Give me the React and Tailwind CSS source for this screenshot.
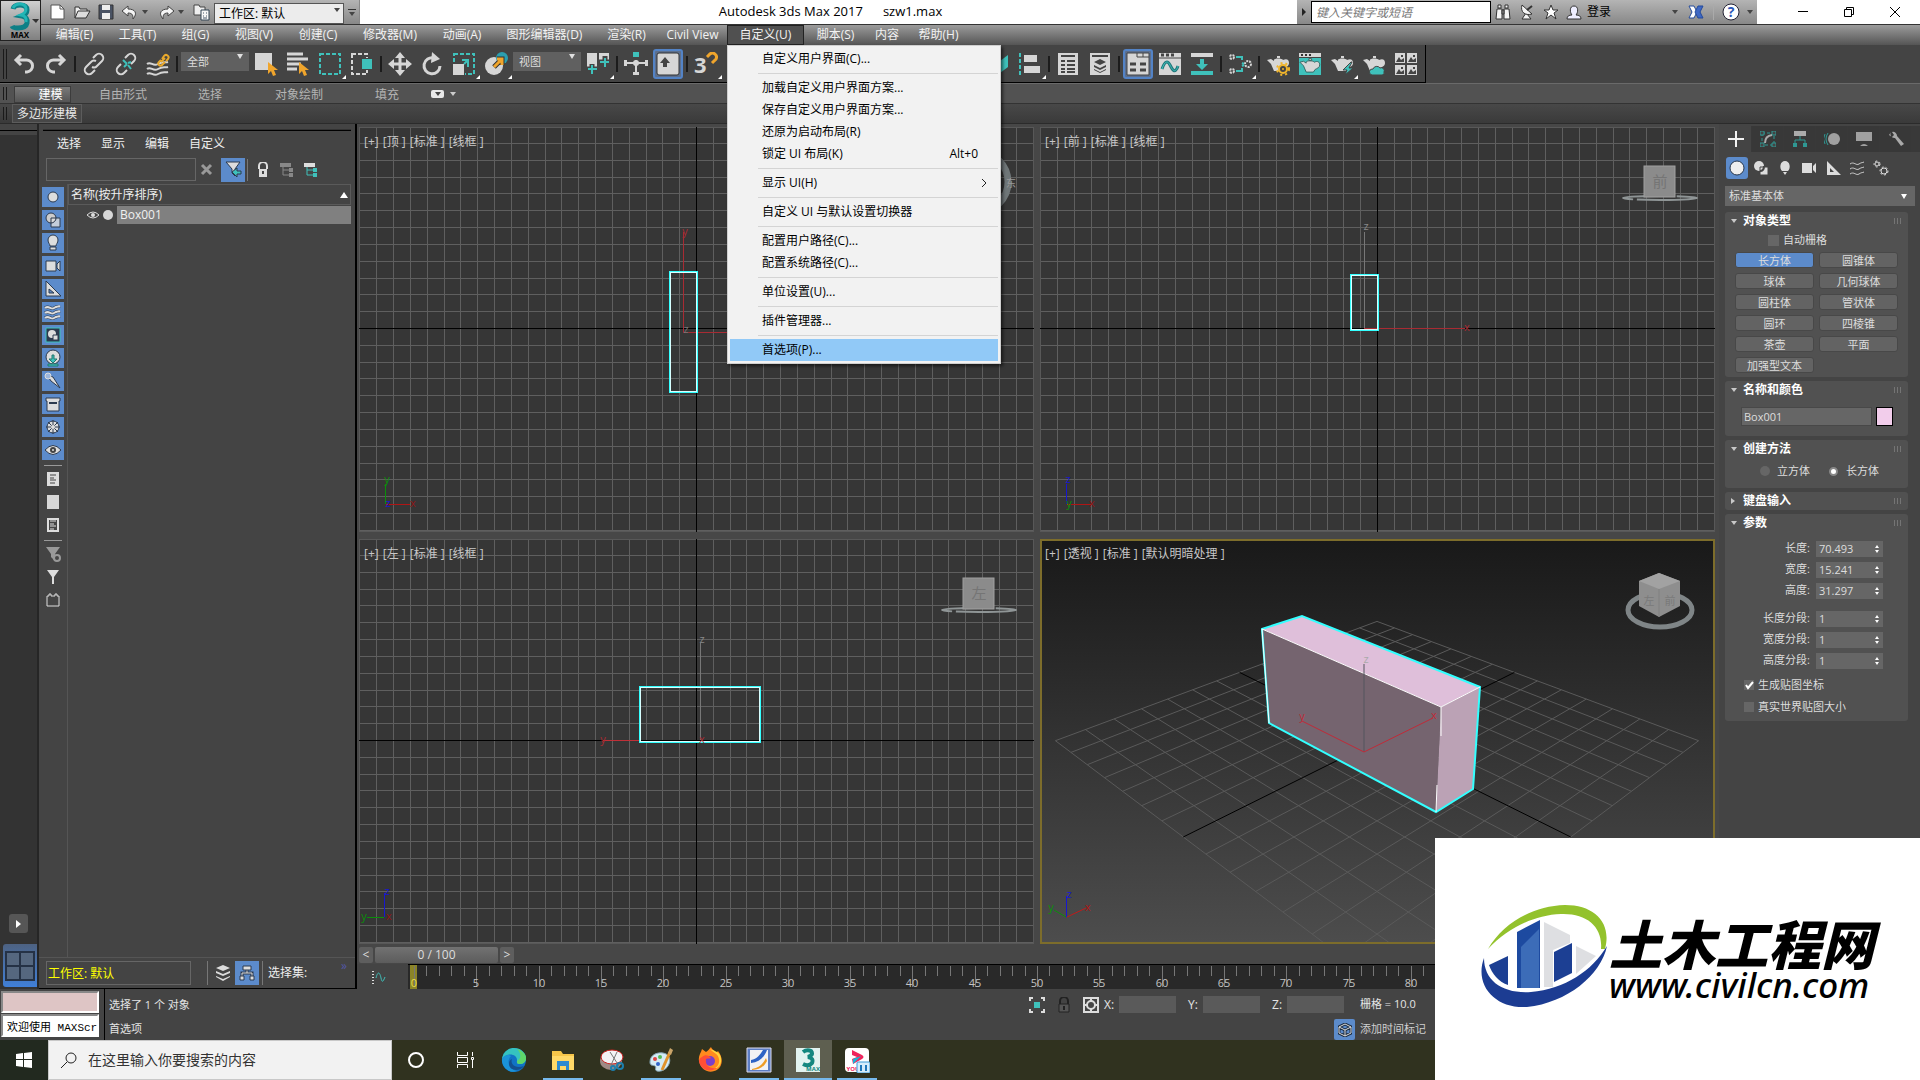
import React from "react";

const TEAL = "#3fc1bb";
const LIGHT = "#d6d6d6";

function Icon({ size = 24, className = "", children }) {
  return (
    <svg width={size} height={size} viewBox={`0 0 ${size} ${size}`} fill="none" className={`block shrink-0 ${className}`} aria-hidden="true">
      {children}
    </svg>
  );
}

/* ---------- main toolbar drawings (24 x 24) ---------- */

const Undo = () => (
  <Icon><path d="M9 3 4 8l5 5M5 8h9a6 6 0 0 1 1 12h-2" stroke={LIGHT} strokeWidth="3" /></Icon>
);
const Redo = () => (
  <Icon><path d="m15 3 5 5-5 5M19 8h-9a6 6 0 0 0-1 12h2" stroke={LIGHT} strokeWidth="3" /></Icon>
);
const Link = () => (
  <Icon>
    <path d="M14 9a4 4 0 0 0-5 1l-5 5a4 4 0 0 0 6 6l3-3" stroke={LIGHT} strokeWidth="2" />
    <path d="M10 15a4 4 0 0 0 5-1l5-5a4 4 0 0 0-6-6l-3 3" stroke={LIGHT} strokeWidth="2" />
  </Icon>
);
const Unlink = () => (
  <Icon>
    <path d="m7 12-3 3a4 4 0 0 0 6 6l3-3M17 12l3-3a4 4 0 0 0-6-6l-3 3" stroke={LIGHT} strokeWidth="2" />
    <path d="m9 8 4 4m1 1 3 4M13 12l-3 3m4-4 3-1" stroke={TEAL} strokeWidth="2" />
  </Icon>
);
const Bind = () => (
  <Icon>
    <path d="M1 12c4-3 6 3 11 0s7-1 10-2M1 17c4-3 6 3 11 0s7-1 10-2M1 22c4-3 6 3 11 0s7-1 10-2" stroke={LIGHT} strokeWidth="2" />
    <path d="m15 8-2 2a2 2 0 0 0 3 3l3-3m-3-3 2-3a2 2 0 0 1 4 3l-2 2m-5 1 4-4" stroke="#e9a92c" strokeWidth="2" />
  </Icon>
);
const Cursor = ({ x = 13, y = 10 }) => (
  <path transform={`translate(${x} ${y})`} d="M0 0v12l3-3 2 5 3-1-2-5h4z" fill="#f0a52c" />
);
const SelectObject = () => (
  <Icon><path d="M1 1h17v17H1z" fill={LIGHT} /><Cursor x={14} y={10} /></Icon>
);
const SelectByName = () => (
  <Icon><path d="M1 2h16M1 7h21M1 12h14M1 17h10" stroke={LIGHT} strokeWidth="3" /><Cursor x={13} y={10} /></Icon>
);
const RectRegion = () => (
  <Icon><path d="M2 2h20v20H2z" stroke={TEAL} strokeWidth="2" strokeDasharray="4 2" /></Icon>
);
const WindowCross = () => (
  <Icon>
    <path d="M2 2h15v20H2z" stroke={LIGHT} strokeWidth="2" strokeDasharray="4 2" />
    <path d="M11 6h12v12H11z" fill="#444" /><path d="M12 7h10v10H12z" fill={TEAL} />
  </Icon>
);
const Move = () => (
  <Icon>
    <path d="M12 3v18M3 12h18" stroke={LIGHT} strokeWidth="3" />
    <path d="m12 0 5 6H7zM12 24l5-6H7zM0 12l6-5v10zM24 12l-6-5v10z" fill={LIGHT} />
  </Icon>
);
const Rotate = () => (
  <Icon>
    <path d="M14 6a8 8 0 1 0 6 8" stroke={LIGHT} strokeWidth="3" />
    <path d="m12 0 8 7-9 4z" fill={LIGHT} />
  </Icon>
);
const Scale = () => (
  <Icon>
    <path d="M2 2h20v20H2z" stroke={TEAL} strokeWidth="2" strokeDasharray="4 2" />
    <path d="M0 11h13v13H0z" fill="#444" /><path d="M1 12h11v11H1z" fill={LIGHT} />
    <path d="M10 8h6v7M12 12l4-4" stroke={TEAL} strokeWidth="2" />
  </Icon>
);
const Place = () => (
  <Icon>
    <circle cx="10" cy="14" r="9" fill={LIGHT} />
    <circle cx="18" cy="6" r="6" fill="#2b9fb0" />
    <path d="m10 15 7-7m-4-1h5v6" stroke="#333" strokeWidth="5" />
    <path d="m10 15 7-7m-4-1h5v6" stroke="#f0a52c" strokeWidth="3" />
  </Icon>
);
const Pivot = () => (
  <Icon>
    <path d="M1 1h10v15H1zM13 1h10v10H13z" fill={LIGHT} />
    <path d="M6 12v11M0 17h12M19 4v12M13 10h11" stroke="#444" strokeWidth="5" />
    <path d="M6 13v9M2 17h9M19 6v9M14 10h9" stroke={TEAL} strokeWidth="2" />
  </Icon>
);
const Manipulate = () => (
  <Icon>
    <path d="M12 8v14M2 11h20" stroke={LIGHT} strokeWidth="2" />
    <path d="M9 20h6v3H9zM0 8h3v6H0zM21 8h3v6h-3z" fill={LIGHT} />
    <path d="M9 0h6v5H9z" fill={TEAL} /><circle cx="12" cy="11" r="3" fill={LIGHT} />
  </Icon>
);
const Keyboard = () => (
  <Icon>
    <path d="M1 3q0-2 2-2h18q2 0 2 2v18q0 2-2 2H3q-2 0-2-2z" fill={LIGHT} stroke="#333" />
    <path d="m9 5 5 6h-3v4H7v-4H4z" fill="#444" />
  </Icon>
);
const Snap = () => (
  <Icon>
    <text x="0" y="21" fontSize="22" fontWeight="700" fill={LIGHT} fontFamily="Open Sans">3</text>
    <path d="m13 5 3-3a4 4 0 0 1 6 5l-4 4" stroke="#f0a52c" strokeWidth="3" />
  </Icon>
);
const Mirror = () => (
  <Icon><path d="M1 4 9 8v14H1z" fill={LIGHT} /><path d="m14 9 8-6v12l-8 6z" fill={TEAL} /></Icon>
);
const Align = () => (
  <Icon>
    <path d="M2 1v22" stroke={TEAL} strokeWidth="2" strokeDasharray="4 2" />
    <path d="M6 3h13v7H6zM6 14h16v7H6z" fill={LIGHT} />
  </Icon>
);
const SceneList = () => (
  <Icon>
    <path d="M2 1h20v22H2z" fill={LIGHT} />
    <path d="M5 4h14M5 9h4M11 9h8M5 13h4M11 13h8M5 17h4M11 17h8M5 20h4M11 20h8" stroke="#444" strokeWidth="2" />
  </Icon>
);
const Layers = () => (
  <Icon>
    <path d="M2 1h20v22H2z" fill={LIGHT} />
    <path d="M4 4h16" stroke="#444" strokeWidth="2" />
    <path d="m12 7 6 3-6 3-6-3zM6 13l6 3 6-3v2l-6 3-6-3zM6 17l6 3 6-3v1l-6 3-6-3z" fill="#444" />
  </Icon>
);
const Ribbon = () => (
  <Icon>
    <path d="M1 1h22v22H1z" fill={LIGHT} />
    <path d="M1 1h22v22H1zM11 1v4h12M17 1v4" stroke="#444" />
    <path d="M4 12h6M14 12h6M4 18h6M14 18h6" stroke="#444" strokeWidth="3" />
  </Icon>
);
const Curve = () => (
  <Icon>
    <path d="M1 1h22v22H1z" fill={LIGHT} />
    <path d="M3 3h3M8 3h3M13 3h3" stroke="#444" strokeWidth="3" /><path d="M1 6h22" stroke="#444" />
    <path d="M4 17c3-9 6-8 8-4s5 10 8 1" stroke="#20777b" strokeWidth="3" />
    <path d="M4 17c3-9 6-8 8-4s5 10 8 1" stroke={TEAL} />
  </Icon>
);
const Import = () => (
  <Icon>
    <path d="M1 1h22v4H1z" fill={LIGHT} /><path d="M1 19h22v4H1z" fill={TEAL} />
    <path d="M10 7h4v5h4l-6 6-6-6h4z" fill={TEAL} />
  </Icon>
);
const Schematic = () => (
  <Icon>
    <g stroke={LIGHT} strokeWidth="2" strokeDasharray="2 1">
      <circle cx="4" cy="5" r="2" /><circle cx="4" cy="19" r="2" /><circle cx="20" cy="12" r="3" />
    </g>
    <path d="M8 5h6v3M8 19h6v-3m0-5 2 1m-2 2 2-1" stroke={TEAL} strokeWidth="2" />
  </Icon>
);
const pot = "M8 8c0-2 8-2 9 0 4-2 6 0 6 3s-3 4-5 5l-2 3H8l-3-7-4-4 4-1 3 2zm3-4h3v2h-3z";
const TeapotGear = () => (
  <Icon>
    <path d={pot} fill={LIGHT} />
    <circle cx="17" cy="17" r="6" stroke="#f0b52c" strokeWidth="2" strokeDasharray="2 3" />
    <circle cx="17" cy="17" r="4" stroke="#f0b52c" strokeWidth="2" fill="#444" />
    <circle cx="17" cy="17" r="1" fill="#f0b52c" />
  </Icon>
);
const TeapotFrame = () => (
  <Icon>
    <path d="M1 1h22v4H1z" fill={LIGHT} /><path d="M3 3h2M7 3h2M11 3h2" stroke="#333" strokeWidth="2" />
    <path d="M1 6h22v17H1z" fill={TEAL} />
    <path transform="translate(1 3) scale(.9)" d={pot} fill={LIGHT} stroke="#34605e" />
  </Icon>
);
const TeapotFlash = () => (
  <Icon>
    <path d={pot} fill={LIGHT} /><path d="m21 10-8 8h4l-2 5 8-7h-4l3-6z" fill={TEAL} stroke="#444" />
  </Icon>
);
const TeapotCloud = () => (
  <Icon>
    <path d={pot} fill={LIGHT} />
    <path d="M10 23a3 3 0 0 1 1-6 4 4 0 0 1 7-1 3 3 0 0 1 4 4q1 3-2 3z" fill={TEAL} stroke="#444" />
  </Icon>
);
const Gallery = () => (
  <Icon>
    {[[1, 1], [13, 1], [1, 13], [13, 13]].map(([x, y]) => (
      <g key={`${x}-${y}`}>
        <path d={`M${x} ${y}h10v10H${x}z`} fill={LIGHT} />
        <path d={`M${x + 1} ${y + 9}l3-5 2 3 3-2v4zM${x + 6} ${y + 2}h2v2h-2z`} fill="#444" />
      </g>
    ))}
  </Icon>
);

function Tool({ label, flyout, active, children }) {
  return (
    <button
      type="button"
      aria-label={label}
      className={
        active
          ? "relative mx-px flex h-[30px] w-[30px] shrink-0 items-center justify-center rounded-[3px] border-2 border-[#5383c6] bg-[#5d6f8c]"
          : "relative flex h-[30px] w-8 shrink-0 items-center justify-center"
      }
    >
      {children}
      {flyout && <span className="absolute right-0 bottom-0 border-b-4 border-l-4 border-b-white border-l-transparent" />}
    </button>
  );
}
const Sep = () => <span className="mx-[2px] h-4 w-[2px] shrink-0 bg-[#1c1c1c]" />;
const Grip = () => <span className="mx-[3px] h-[calc(100%-6px)] w-1 shrink-0 border-x border-[#1a1a1a]" />;

function ToolSelect({ label, value }) {
  return (
    <div className="relative mx-px mb-2 shrink-0">
      <select aria-label={label} className="h-[19px] w-[68px] appearance-none bg-[#606060] pl-1.5 text-[11px] leading-none text-[#dddddd]">
        <option>{value}</option>
      </select>
      <span className="pointer-events-none absolute top-1.5 right-1.5 border-x-3 border-t-5 border-x-transparent border-t-[#e0e0e0]" />
    </div>
  );
}

function Toolbar() {
  return (
    <div className="flex h-[38px] shrink-0 overflow-hidden bg-[#444444]">
      <div className="flex items-center border-r border-b border-black pt-px pr-[3px]">
        <Grip />
        <div className="-ml-0.5 flex items-center">
          <Tool label="撤消"><Undo /></Tool>
          <Tool label="重做"><Redo /></Tool>
          <Sep />
          <Tool label="链接"><Link /></Tool>
          <Tool label="取消链接"><Unlink /></Tool>
          <Tool label="绑定到空间扭曲"><Bind /></Tool>
          <Sep />
          <ToolSelect label="选择过滤器" value="全部" />
          <Tool label="选择对象"><SelectObject /></Tool>
          <Tool label="按名称选择"><SelectByName /></Tool>
          <Tool label="矩形选择区域" flyout><RectRegion /></Tool>
          <Tool label="窗口/交叉"><WindowCross /></Tool>
          <Sep />
          <Tool label="移动"><Move /></Tool>
          <Tool label="旋转"><Rotate /></Tool>
          <Tool label="缩放" flyout><Scale /></Tool>
          <Tool label="放置" flyout><Place /></Tool>
          <ToolSelect label="参考坐标系" value="视图" />
          <Tool label="轴点中心" flyout><Pivot /></Tool>
          <Sep />
          <Tool label="操纵"><Manipulate /></Tool>
          <Tool label="键盘快捷键覆盖" active><Keyboard /></Tool>
          <Sep />
          <Tool label="捕捉" flyout><Snap /></Tool>
          <span className="w-[260px] shrink-0" />
          <Tool label="镜像"><Mirror /></Tool>
          <Tool label="对齐" flyout><Align /></Tool>
          <Sep />
          <Tool label="场景资源管理器"><SceneList /></Tool>
          <Tool label="层资源管理器"><Layers /></Tool>
          <Sep />
          <Tool label="功能区" active><Ribbon /></Tool>
          <Tool label="曲线编辑器"><Curve /></Tool>
          <Tool label="图解视图"><Import /></Tool>
          <Sep />
          <Tool label="材质编辑器" flyout><Schematic /></Tool>
          <Sep />
          <Tool label="渲染设置"><TeapotGear /></Tool>
          <Tool label="渲染帧窗口"><TeapotFrame /></Tool>
          <Tool label="渲染产品" flyout><TeapotFlash /></Tool>
          <Tool label="云渲染"><TeapotCloud /></Tool>
          <Tool label="图库"><Gallery /></Tool>
        </div>
      </div>
    </div>
  );
}

/* ---------- title bar ---------- */

const DownCaret = ({ className = "" }) => (
  <span className={`inline-block shrink-0 border-x-3 border-t-4 border-x-transparent border-t-[#444] ${className}`} />
);

function QuickButton({ label, children }) {
  return (
    <button type="button" aria-label={label} className="flex h-6 w-6 shrink-0 items-center justify-center">
      {children}
    </button>
  );
}

function TitleBar() {
  return (
    <div className="flex h-6 shrink-0 bg-white">
      <div className="flex w-[360px] shrink-0 items-center border-r border-[#888] bg-linear-to-b from-[#b4b4b4] to-[#888888] pl-[46px]">
        <QuickButton label="新建">
          <Icon size={18}><path d="M2 2h9l4 4v10H2z" fill="#fff" stroke="#555" /><path d="M11 2v4h4" stroke="#555" /></Icon>
        </QuickButton>
        <QuickButton label="打开">
          <Icon size={18}><path d="M2 15V4h4l1 2h7v2" fill="#eee" stroke="#333" /><path d="m2 15 3-7h12l-4 7z" fill="#ddd" stroke="#333" /></Icon>
        </QuickButton>
        <QuickButton label="保存">
          <Icon size={18}><path d="M2 2h14v14H2z" fill="#4a5364" stroke="#333" /><path d="M5 2h8v5H5zM5 10h8v6H5z" fill="#eee" /></Icon>
        </QuickButton>
        <QuickButton label="撤消">
          <Icon size={18}><path d="M7 3 1 8l6 5v-3c5 0 5 3 5 6 5-6 2-10-5-10z" fill="#f4f4f4" stroke="#444" /></Icon>
        </QuickButton>
        <DownCaret className="mr-1.5" />
        <QuickButton label="重做">
          <Icon size={18}><path d="m11 3 6 5-6 5v-3c-5 0-5 3-5 6-5-6-2-10 5-10z" fill="#f4f4f4" stroke="#444" /></Icon>
        </QuickButton>
        <DownCaret className="mr-1.5" />
        <QuickButton label="项目文件夹">
          <Icon size={18}>
            <path d="M1 2h5l1 2h5v8H1z" fill="#eee" stroke="#444" /><path d="M8 7h8v10H8z" fill="#f6f6f6" stroke="#345" /><path d="M10 10h1m2 0h1m-4 3h1m2 0h1m-4 2h4" stroke="#456" />
          </Icon>
        </QuickButton>
        <div className="relative">
          <select aria-label="工作区" className="h-[21px] w-[130px] appearance-none border border-[#555] bg-[#ececec] pl-1 text-xs text-black">
            <option>工作区: 默认</option>
          </select>
          <DownCaret className="pointer-events-none absolute top-2 right-1" />
        </div>
        <span className="ml-1 flex flex-col items-center gap-0.5"><span className="h-px w-2 bg-[#333]" /><DownCaret /></span>
      </div>
      <h1 className="flex min-w-0 flex-1 items-center justify-center gap-5 pl-1 text-[13px] text-black">
        <span>Autodesk 3ds Max 2017</span><span>szw1.max</span>
      </h1>
      <div className="flex w-[460px] shrink-0 items-center bg-linear-to-b from-[#b4b4b4] to-[#888888]">
        <button type="button" aria-label="收起" className="flex h-6 w-3.5 items-center justify-center">
          <span className="border-y-4 border-l-4 border-y-transparent border-l-[#222]" />
        </button>
        <input aria-label="搜索帮助" placeholder="键入关键字或短语" className="h-[22px] w-[180px] border border-black bg-white pl-1 text-xs placeholder:text-[#777] placeholder:italic" />
        <QuickButton label="搜索">
          <Icon size={18}>
            <path d="M4 2h3v3H4zM11 2h3v3h-3zM3 6h5v10H2zM10 6h5l1 10h-6zM8 7h2v4H8z" fill="#f4f4f4" stroke="#333" />
          </Icon>
        </QuickButton>
        <QuickButton label="通讯中心">
          <Icon size={18}><path d="M8 10 4 16h9l-4-5" fill="#f4f4f4" stroke="#333" /><path d="M4 2c-2 7 3 11 10 9z" fill="#f4f4f4" stroke="#333" /><path d="m9 7 5-4" stroke="#333" strokeWidth="2" /></Icon>
        </QuickButton>
        <QuickButton label="收藏夹">
          <Icon size={18}><path d="m9 2 2 5h5l-4 3 2 6-5-4-5 4 2-6-4-3h5z" fill="#fff" stroke="#333" /></Icon>
        </QuickButton>
        <button type="button" className="ml-0.5 flex items-center gap-1 text-xs text-black">
          <Icon size={18}><path d="M2 16c0-3 2-4 5-4-2-2-3-9 2-9s4 7 2 9c3 0 5 1 5 4z" fill="#eef" stroke="#333" /></Icon>
          登录
        </button>
        <DownCaret className="ml-[61px]" />
        <span className="ml-1.5"><QuickButton label="Autodesk Exchange">
          <Icon size={18}><path d="M2 3h5l3 6-3 6H2l3-6z" fill="#fff" stroke="#234a9c" /><path d="M16 3h-5L8 9l3 6h5l-3-6z" fill="#3f68c4" stroke="#234a9c" /></Icon>
        </QuickButton></span>
        <span className="mx-[5px] h-4 w-px bg-[#aaa]" />
        <QuickButton label="帮助">
          <Icon size={18}>
            <circle cx="9" cy="9" r="8" fill="#fff" stroke="#223" />
            <text x="9" y="14" fontSize="14" fontWeight="700" textAnchor="middle" fill="#2b57b8" fontFamily="Open Sans">?</text>
          </Icon>
        </QuickButton>
        <DownCaret className="ml-1" />
      </div>
      <div className="flex w-[163px] shrink-0 items-center justify-end pr-0.5 text-black">
        <button type="button" aria-label="最小化" className="flex h-6 w-[46px] items-center justify-center"><Icon size={12}><path d="M1 5.500h10" stroke="#000" /></Icon></button>
        <button type="button" aria-label="还原" className="flex h-6 w-[46px] items-center justify-center"><Icon size={12}><path d="M1.500 3.500h7v7h-7zM3.500 3.500v-2h7v7h-2" stroke="#000" /></Icon></button>
        <button type="button" aria-label="关闭" className="flex h-6 w-[46px] items-center justify-center"><Icon size={12}><path d="m1 1 10 10M11 1 1 11" stroke="#000" /></Icon></button>
      </div>
    </div>
  );
}

/* ---------- menu bar and open menu ---------- */

const menuItems = [
  ["编辑(E)", "w-[63px]"], ["工具(T)", "w-[63px]"], ["组(G)", "w-[53px]"], ["视图(V)", "w-[64px]"],
  ["创建(C)", "w-[64px]"], ["修改器(M)", "w-[80px]"], ["动画(A)", "w-[64px]"], ["图形编辑器(D)", "w-[101px]"],
  ["渲染(R)", "w-[63px]"], ["Civil View", "w-[69px]"], ["自定义(U)", "w-[77px]"], ["脚本(S)", "w-[63px]"],
  ["内容", "w-[40px]"], ["帮助(H)", "w-[63px]"],
];

const customizeMenu = [
  ["自定义用户界面(C)..."], null,
  ["加载自定义用户界面方案..."], ["保存自定义用户界面方案..."], ["还原为启动布局(R)"], ["锁定 UI 布局(K)", "Alt+0"], null,
  ["显示 UI(H)", "›"], null,
  ["自定义 UI 与默认设置切换器"], null,
  ["配置用户路径(C)..."], ["配置系统路径(C)..."], null,
  ["单位设置(U)..."], null,
  ["插件管理器..."], null,
  ["首选项(P)..."],
];

function CustomizeMenu() {
  return (
    <div role="menu" className="absolute top-full left-0 z-30 w-[274px] border border-[#cfcfcf] bg-[#f2f2f2] p-0.5 shadow-[2px_2px_3px_rgba(0,0,0,0.55)]">
      {customizeMenu.map((item, i) =>
        item === null ? (
          <div key={i} className="ml-7 flex h-[7px] items-center"><span className="h-px w-full bg-[#d4d4d4]" /></div>
        ) : (
          <button
            key={i}
            type="button"
            role="menuitem"
            className={`flex h-[22px] w-full items-center justify-between pr-5 pl-8 text-xs text-black ${item[0].startsWith("首选项") ? "bg-[#91c9f7]" : ""}`}
          >
            <span>{item[0]}</span>
            {item[1] === "›" ? <Icon size={8} className="-mr-2.5"><path d="m2 0 4 4-4 4" stroke="#222" /></Icon> : item[1] && <span>{item[1]}</span>}
          </button>
        )
      )}
    </div>
  );
}

function MenuBar() {
  return (
    <nav className="flex h-[21px] shrink-0 border-t border-[#333] bg-linear-to-b from-[#9c9c9c] to-[#555555] pl-[43px]">
      {menuItems.map(([name, w]) => (
        <div key={name} className={`relative shrink-0 ${w}`}>
          <button
            type="button"
            className={`flex h-full w-full items-center justify-center text-xs whitespace-nowrap text-[#f2f2f2] ${name === "自定义(U)" ? "border border-[#222] bg-[#505050]" : ""}`}
          >
            {name}
          </button>
          {name === "自定义(U)" && <CustomizeMenu />}
        </div>
      ))}
    </nav>
  );
}

function AppButton() {
  return (
    <button type="button" aria-label="应用程序菜单" className="absolute top-0 left-0 z-20 h-[41px] w-[41px] border border-[#222] bg-linear-to-b from-[#d0d0d0] to-[#808080]">
      <svg width="39" height="39" viewBox="0 0 39 39" fill="none">
        <path d="M12 8q1-4 7-4 7 0 7 5 0 4-5 6 6 1 5 7-1 5-9 5-5 0-6-2" stroke="#0d7f86" strokeWidth="5" />
        <path d="M12 7q2-4 7-4 6 0 6 5 0 4-5 6 6 1 5 7" stroke="#22b5b5" strokeWidth="3" />
        <path d="M31 18h7l-3 4z" fill="#333" />
        <text x="19" y="37" fontSize="8" fontWeight="700" textAnchor="middle" fill="#000" fontFamily="Open Sans">MAX</text>
      </svg>
    </button>
  );
}

function RibbonBars() {
  return (
    <div className="shrink-0">
      <div className="flex h-[21px] items-center border-t border-[#6a6a6a] border-b border-b-[#333] bg-[#525252] text-xs text-[#b4b4b4]">
        <Grip />
        <button type="button" className="ml-1 h-[17px] w-[57px] self-end border border-[#3c3c3c] bg-linear-to-b from-[#7a7a7a] to-[#555] pl-4 leading-none text-white">建模</button>
        <button type="button" className="ml-7 pt-0.5 leading-none">自由形式</button>
        <button type="button" className="ml-[51px] pt-0.5 leading-none">选择</button>
        <button type="button" className="ml-[53px] pt-0.5 leading-none">对象绘制</button>
        <button type="button" className="ml-[52px] pt-0.5 leading-none">填充</button>
        <button type="button" aria-label="显示选项" className="ml-8 flex items-center gap-1.5">
          <span className="flex h-2 w-[13px] items-center justify-center rounded-xs bg-[#e8e8e8]"><DownCaret className="border-x-2 border-t-3" /></span>
          <DownCaret className="border-x-2 border-t-3 border-t-[#ccc]" />
        </button>
      </div>
      <div className="flex h-5 items-center border-b border-[#2b2b2b] bg-linear-to-b from-[#484848] to-[#3a3a3a]">
        <Grip />
        <button type="button" className="ml-0.5 h-[19px] border border-[#5c5c5c] bg-[#474747] px-1 pt-px text-xs leading-none text-[#e8e8e8]">多边形建模</button>
      </div>
    </div>
  );
}

/* ---------- scene explorer ---------- */

const dark = "#2c3a4e";
const filterIcons = [
  ["几何体", <circle cx="9" cy="9" r="5" fill="#ddd" stroke={dark} />],
  ["图形", <><circle cx="7" cy="7" r="5" fill="#ccc" stroke={dark} /><path d="M7 7h9v9H7z" stroke={dark} fill="#ddd" fillOpacity=".8" /><path d="M7 12a5 5 0 0 0 5-5" stroke={dark} /></>],
  ["灯光", <path d="M6 12c0-2-2-3-2-6a5 5 0 0 1 10 0c0 3-2 4-2 6zm0 1h6v3H6z" fill="#ddd" stroke={dark} />],
  ["摄影机", <path d="M2 4h10v10H2zM13 7l3-3v10l-3-3z" fill="#ddd" stroke={dark} />],
  ["辅助对象", <><path d="M2 1v15h15z" fill="#ddd" stroke={dark} /><path d="M5 9v4h5z" fill="#5f8bc8" stroke={dark} /></>],
  ["空间扭曲", <><path d="M1 5c4-3 6 2 9 0s4-1 6-2M1 10c4-3 6 2 9 0s4-1 6-2M1 15c4-3 6 2 9 0s4-1 6-2" stroke={dark} strokeWidth="3" /><path d="M1 5c4-3 6 2 9 0s4-1 6-2M1 10c4-3 6 2 9 0s4-1 6-2M1 15c4-3 6 2 9 0s4-1 6-2" stroke="#ddd" strokeWidth="2" /></>],
  ["组", <><path d="M2 2h14v14H2z" fill={dark} stroke={TEAL} /><circle cx="8" cy="8" r="4" fill="#ddd" /><path d="M9 9h5v5H9z" fill="#ddd" stroke={dark} /></>],
  ["外部参照", <><circle cx="9" cy="8" r="7" fill="#ddd" stroke={dark} /><path d="M8 6h2v4h3l-4 4-4-4h3zM4 15h10v2H4z" stroke="#23766f" fill={TEAL} /></>],
  ["骨骼", <><path d="m6 4 3 1 7 11-9-7-2-3z" fill="#ddd" stroke={dark} /><circle cx="4" cy="4" r="3" fill="#9db7dd" stroke="#ddd" /></>],
  ["容器", <><path d="M2 3h14v3h-1v10H3V6H2z" fill="#ddd" stroke={dark} /><path d="M5 8h8" stroke={dark} strokeWidth="2" /></>],
  ["冻结", <><circle cx="9" cy="9" r="6" fill="#ddd" stroke={dark} /><path d="M9 2v14M2 9h14M4 4l10 10M14 4 4 14" stroke={dark} /><circle cx="9" cy="9" r="2" fill="#ddd" /></>],
  ["隐藏", <><path d="M1 9q8-9 16 0-8 9-16 0z" fill="#ddd" stroke={dark} /><circle cx="9" cy="9" r="3" fill="#444" /><circle cx="9" cy="9" r="1" fill="#ddd" /></>],
];

const Gear = ({ x, y, r, c = "#ddd" }) => (
  <><circle cx={x} cy={y} r={r} stroke={c} strokeWidth="1" /><circle cx={x} cy={y} r={r + 1} stroke={c} strokeDasharray="2 2" /></>
);

function SceneExplorer() {
  return (
    <section aria-label="场景资源管理器" className="flex w-[318px] shrink-0 flex-col border-r-2 border-b border-black bg-[#444444]">
      <div className="mx-1 mt-[5px] h-0.5 shrink-0 border-b border-black bg-[#333]" />
      <div className="flex h-[26px] shrink-0 items-center gap-5 pl-[18px] text-xs text-[#eeeeee]">
        {["选择", "显示", "编辑", "自定义"].map((t) => <button key={t} type="button">{t}</button>)}
      </div>
      <div className="flex h-[25px] shrink-0 items-center pl-[7px]">
        <input aria-label="查找" className="h-[23px] w-[150px] border border-[#666] bg-[#444]" />
        <button type="button" aria-label="清除" className="ml-1"><Icon size={13}><path d="m2 2 9 9M11 2l-9 9" stroke="#999" strokeWidth="3" /></Icon></button>
        <button type="button" aria-label="过滤选择" className="ml-2 flex h-6 w-6 items-center justify-center bg-[#5c8bcb]">
          <Icon size={18}><path d="M2 1h14l-5 7v7l-3-3V8z" fill="#ddd" stroke={dark} /><path d="M17 10h-4V7l-5 4 5 5v-3h4z" fill={TEAL} stroke={dark} /></Icon>
        </button>
        <span className="ml-0.5 h-[22px] w-px bg-[#777]" />
        <button type="button" aria-label="锁定" className="ml-[7px]"><Icon size={16}><path d="M4 7V4a4 4 0 0 1 8 0v3" stroke="#ddd" strokeWidth="2" /><path d="M4 7h8v8H4z" fill="#ddd" /><path d="M8 9v3" stroke="#444" strokeWidth="2" /></Icon></button>
        {["#999", TEAL].map((c, i) => (
          <button key={c} type="button" aria-label={i ? "层次" : "层"} className="ml-2">
            <Icon size={16}><path d="M1 1h11v4H1z" fill={i ? "#ddd" : "#888"} /><path d="M4 5v8h6M4 8h6" stroke={i ? c : "#888"} /><path d="M10 6h4v4h-4zM10 11h4v4h-4z" fill={i ? c : "#888"} /></Icon>
          </button>
        ))}
      </div>
      <div className="mt-0.5 flex min-h-0 flex-1 border-b border-[#555]">
        <div className="flex w-7 shrink-0 flex-col items-center gap-[3px] pt-[3px]">
          {filterIcons.map(([name, art]) => (
            <button key={name} type="button" aria-label={name} className="flex h-5 w-[22px] shrink-0 items-center justify-center bg-[#5c8bcb]"><Icon size={18}>{art}</Icon></button>
          ))}
          <span className="mt-0.5 h-px w-[18px] shrink-0 bg-[#999]" />
          <button type="button" aria-label="全部显示" className="flex h-5 shrink-0 items-center"><Icon size={16}><path d="M2 1h12v14H2z" fill="#ddd" /><path d="M5 4h6M5 7h4M5 9h6M5 12h5" stroke="#444" /></Icon></button>
          <button type="button" aria-label="全不显示" className="flex h-5 shrink-0 items-center"><Icon size={16}><path d="M2 1h12v14H2z" fill="#d8d8d8" /></Icon></button>
          <button type="button" aria-label="反转显示" className="flex h-5 shrink-0 items-center"><Icon size={16}><path d="M3 2h10v12H3z" stroke="#ddd" strokeWidth="2" /><path d="M5 4h6M5 7h4M5 9h6M5 12h4" stroke="#ddd" /></Icon></button>
          <span className="mt-0.5 h-px w-[18px] shrink-0 bg-[#999]" />
          <button type="button" aria-label="过滤器设置" className="flex h-5 shrink-0 items-center"><Icon size={16}><path d="M1 1h14l-5 7v7l-4-4V8z" fill="#999" /><circle cx="12" cy="12" r="3" fill="#444" stroke="#999" strokeWidth="2" /></Icon></button>
          <button type="button" aria-label="过滤器" className="flex h-5 shrink-0 items-center"><Icon size={16}><path d="M2 1h12L9 8v7H7V8z" fill="#ddd" /></Icon></button>
          <button type="button" aria-label="容器" className="flex h-5 shrink-0 items-center"><Icon size={16}><path d="M2 4h2V2h2v2h4V2h2v2h2v10H2z" stroke="#ddd" /></Icon></button>
        </div>
        <div className="mr-1 min-w-0 flex-1 border-l border-[#555]">
          <button type="button" className="flex h-[21px] w-full items-center justify-between border border-[#5a5a5a] px-0.5 text-xs text-[#eeeeee]">
            <span>名称(按升序排序)</span>
            <span className="border-x-4 border-b-6 border-x-transparent border-b-white" />
          </button>
          <div className="flex h-5 items-center">
            <Icon size={14} className="ml-[18px]"><path d="M1 7q6-6 12 0-6 6-12 0z" stroke="#ddd" /><circle cx="7" cy="7" r="2" fill="#ddd" /></Icon>
            <span className="ml-[3px] h-[10px] w-[10px] rounded-full bg-[#d8d8d8]" />
            <span className="ml-1 h-[18px] flex-1 bg-[#808080] pl-[3px] text-xs leading-[18px] text-[#f0f0f0]">Box001</span>
          </div>
        </div>
      </div>
      <div className="flex h-[30px] shrink-0 items-center pl-[7px]">
        <input aria-label="工作区" defaultValue="工作区: 默认" className="h-6 w-[145px] border border-[#666] bg-[#444] pl-px text-xs text-[#ffff00]" />
        <DownCaret className="ml-1 border-t-[#111]" />
        <span className="ml-1.5 h-6 w-px bg-[#777]" />
        <button type="button" aria-label="层" className="ml-[7px]"><Icon size={16}><path d="m8 0 7 3-7 3-7-3zM1 6l7 3 7-3v2l-7 3-7-3zM1 11l7 3 7-3v1l-7 4-7-4z" fill="#ddd" /></Icon></button>
        <button type="button" aria-label="层次" className="ml-1 flex h-6 w-6 items-center justify-center bg-[#5c8bcb]"><Icon size={16}><path d="M8 5v3M3 11V8h10v3" stroke={dark} strokeWidth="3" /><path d="M8 5v3M3 11V8h10v3" stroke="#ddd" /><path d="M4 1h8v4H4zM1 11h4v4H1zM11 11h4v4h-4z" fill="#ddd" stroke={dark} /></Icon></button>
        <span className="mx-[3px] h-6 w-px bg-[#777]" />
        <span className="ml-0.5 text-xs text-[#eeeeee]">选择集:</span>
        <span className="mt-0.5 mr-2 ml-auto self-start text-xs leading-none text-[#5357a8]">»</span>
      </div>
    </section>
  );
}

/* ---------- viewports ---------- */

const CELL = 16.83;

function Grid({ x, y, w = 675, h = 405, cx, cy }) {
  const lines = [];
  for (let i = -22; i <= 22; i++) {
    const px = Math.round(cx + i * CELL) + 0.5;
    const py = Math.round(cy + i * CELL) + 0.5;
    if (i !== 0 && px > x && px < x + w) lines.push(<path key={`v${i}`} d={`M${px} ${y}v${h}`} />);
    if (i !== 0 && py > y && py < y + h) lines.push(<path key={`h${i}`} d={`M${x} ${py}h${w}`} />);
  }
  return (
    <>
      <g stroke="#5f5f5f">{lines}<rect x={x + 0.5} y={y + 0.5} width={w - 1} height={h - 1} stroke="#585858" /></g>
      <path d={`M${cx + 0.5} ${y}v${h}M${x} ${cy + 0.5}h${w}`} stroke="#000" />
    </>
  );
}

const AxisText = ({ x, y, c, children }) => (
  <text x={x} y={y} fill={c} fontSize="11" textAnchor="middle" fontFamily="Open Sans">{children}</text>
);

function WireBox({ x, y, w, h }) {
  return (
    <>
      <rect x={x + 1} y={y + 1} width={w - 2} height={h - 2} stroke="#3ff" strokeWidth="2" />
      <rect x={x + 1.5} y={y + 1.5} width={w - 3} height={h - 3} stroke="#d8ffff" />
    </>
  );
}

function FlatCube({ x, y, label }) {
  return (
    <g>
      <ellipse cx={x + 16} cy={y + 32} rx="37" ry="2" stroke="#8f9596" strokeWidth="2" strokeDasharray="60 4" />
      <rect x={x} y={y} width="31" height="31" fill="#8b8b8b" stroke="#a0a0a0" />
      <text x={x + 16} y={y + 21} fontSize="15" fill="#757575" textAnchor="middle" fontFamily="Noto Sans CJK SC">{label}</text>
    </g>
  );
}

function project(u, v) {
  const d = u - v;
  const e = u + v;
  const q = 1 + 0.17 * e;
  return [1377 + (160.8 * d) / q, (740.7 + 46 * e) / q];
}
const seg = (a, b) => `M${project(...a).join(" ")}L${project(...b).join(" ")}`;
const floor = Array.from({ length: 15 }, (_, i) => -1 + i / 7)
  .filter((t) => Math.abs(t) > 0.01)
  .map((t) => seg([t, -1], [t, 1]) + seg([-1, t], [1, t]))
  .join("");

function Viewport({ labels, view, active, children }) {
  return (
    <div className={`relative min-h-0 min-w-0 overflow-hidden ${active ? "bg-linear-to-b from-[#191919] via-[#333333] to-[#4d4d4d]" : "bg-[#363636]"}`}>
      <svg viewBox={view} preserveAspectRatio="xMidYMid slice" fill="none" className="absolute inset-0 h-full w-full">{children}</svg>
      {active && <span className="pointer-events-none absolute inset-0 border-2 border-[#7d6d2b]" />}
      <div className="relative flex gap-1 pt-1.5 pl-[5px] text-xs leading-[18px] text-[#c8c8c8]">
        {labels.map((l) => <button key={l} type="button" className="whitespace-pre">{l}</button>)}
      </div>
    </div>
  );
}

function Viewports() {
  return (
    <main className="grid min-h-0 flex-1 grid-cols-2 grid-rows-2 gap-x-1.5 gap-y-[7px] bg-[#474747] pt-[3px] pr-1 pb-px pl-0.5">
      <Viewport labels={["[+]", "[顶 ]", "[标准 ]", "[线框 ]"]} view="359 127 675 405">
        <Grid x={359} y={127} cx={696} cy={328} />
        <circle cx="978" cy="182" r="30" stroke="#6f7678" strokeWidth="7" />
        <text x="1011" y="187" fontSize="10" fill="#999" textAnchor="middle" fontFamily="Noto Sans CJK SC">东</text>
        <rect x="962" y="166" width="31" height="31" fill="#8b8b8b" />
        <path d="M683.500 232v100.500H790" stroke="#a82b33" />
        <AxisText x={685} y={235} c="#a82b33">y</AxisText><AxisText x={686} y={333} c="#777">z</AxisText>
        <WireBox x={669} y={271} w={29} h={122} />
        <path d="M385.500 484v20" stroke="#0a8f0a" /><path d="M386 504.500h24" stroke="#b01515" />
        <AxisText x={387} y={483} c="#0a8f0a">y</AxisText><AxisText x={413} y={507} c="#8f1515">x</AxisText><AxisText x={388} y={507} c="#1717d0">z</AxisText>
      </Viewport>
      <Viewport labels={["[+]", "[前 ]", "[标准 ]", "[线框 ]"]} view="1040 127 675 405">
        <Grid x={1040} y={127} cx={1377} cy={328} />
        <FlatCube x={1644} y={166} label="前" />
        <path d="M1364.500 232v96" stroke="#777" /><path d="M1364 328.500h101" stroke="#a82b33" />
        <AxisText x={1366} y={230} c="#888">z</AxisText><AxisText x={1467} y={331} c="#a82b33">x</AxisText>
        <WireBox x={1350} y={274} w={29} h={57} />
        <path d="M1066.500 484v20" stroke="#1717d0" /><path d="M1067 504.500h24" stroke="#b01515" />
        <AxisText x={1068} y={483} c="#1717d0">z</AxisText><AxisText x={1092} y={507} c="#8f1515">x</AxisText><AxisText x={1069} y={507} c="#0a8f0a">y</AxisText>
      </Viewport>
      <Viewport labels={["[+]", "[左 ]", "[标准 ]", "[线框 ]"]} view="359 539 675 405">
        <Grid x={359} y={539} cx={696} cy={740} />
        <FlatCube x={963} y={578} label="左" />
        <path d="M700.500 643v97" stroke="#777" /><path d="M603 740.500h37" stroke="#c03038" />
        <AxisText x={702} y={643} c="#888">z</AxisText><AxisText x={603} y={743} c="#a82b33">y</AxisText>
        <WireBox x={639} y={686} w={122} h={57} />
        <AxisText x={702} y={743} c="#a82b33">x</AxisText>
        <path d="M384.500 893v24" stroke="#1717d0" /><path d="M367 917.500h17" stroke="#0a8f0a" />
        <AxisText x={387} y={895} c="#1717d0">z</AxisText><AxisText x={364} y={920} c="#0a8f0a">y</AxisText><AxisText x={389} y={920} c="#8f1515">x</AxisText>
      </Viewport>
      <Viewport active labels={["[+]", "[透视 ]", "[标准 ]", "[默认明暗处理 ]"]} view="1040 539 675 405">
        <path d={floor} stroke="#5a5a5a" />
        <path d={seg([0, -1], [0, 1]) + seg([-1, 0], [1, 0])} stroke="#000" />
        <path d="M1262 629 1302 616 1480 687 1441 707z" fill="#dfbfda" />
        <path d="M1262 629 1441 707 1436 812 1269 723z" fill="#75646f" />
        <path d="M1441 707 1480 687 1473 789 1436 812z" fill="#bba2b5" />
        <path d="M1262 629 1302 616 1480 687 1473 789 1436 812 1269 723z" stroke="#3ff" strokeWidth="2" />
        <path d="M1262 629 1441 707 1480 687M1441 707v29M1437 785l-1 27M1262 629l7 94" stroke="#fff" />
        <path d="M1364 664v88" stroke="#55555f" /><path d="M1302 721l62 31 69-34" stroke="#c02a38" />
        <AxisText x={1366} y={663} c="#aaa">z</AxisText><AxisText x={1302} y={720} c="#c02a38">y</AxisText><AxisText x={1434} y={719} c="#c02a38">x</AxisText>
        <ellipse cx="1660" cy="610" rx="32" ry="17" stroke="#7f8587" strokeWidth="5" />
        <path d="m1659 573 21 8v25l-21 11-20-11v-25z" fill="#8e8e8e" /><path d="m1639 581 20 8 21-8-21-8z" fill="#a2a2a2" /><path d="M1659 589v28" stroke="#808080" />
        <text x="1649" y="605" fontSize="11" fill="#7a7a7a" textAnchor="middle" fontFamily="Noto Sans CJK SC">左</text>
        <text x="1670" y="605" fontSize="11" fill="#7a7a7a" textAnchor="middle" fontFamily="Noto Sans CJK SC">前</text>
        <path d="M1066.500 896v21" stroke="#1717d0" /><path d="m1066 917-12-7" stroke="#0a8f0a" /><path d="m1067 917 19-9" stroke="#c01a1a" />
        <AxisText x={1069} y={898} c="#1717d0">z</AxisText><AxisText x={1051} y={911} c="#0a8f0a">y</AxisText><AxisText x={1088} y={911} c="#b01515">x</AxisText>
      </Viewport>
    </main>
  );
}

function TimeSlider() {
  return (
    <div className="flex h-[19px] shrink-0 items-center gap-0.5 bg-[#474747] pl-0.5 text-xs text-[#dddddd]">
      <button type="button" aria-label="上一帧" className="flex h-4 w-3.5 items-center justify-center rounded-xs bg-[#5e5e5e]">&lt;</button>
      <button type="button" className="flex h-4 w-[123px] items-center justify-center rounded-xs bg-linear-to-b from-[#727272] to-[#5c5c5c]">0 / 100</button>
      <button type="button" aria-label="下一帧" className="flex h-4 w-3.5 items-center justify-center rounded-xs bg-[#5e5e5e]">&gt;</button>
    </div>
  );
}

function TrackBar() {
  const frames = Array.from({ length: 101 }, (_, i) => i);
  return (
    <div className="flex h-[25px] shrink-0 bg-[#444444]">
      <button type="button" aria-label="迷你曲线编辑器" className="flex w-[51px] shrink-0 items-center justify-center pr-2.5">
        <Icon size={16}><path d="M3 2v13" stroke="#ddd" strokeWidth="2" strokeDasharray="1 2" /><path d="M6 9c2-8 4-5 5 0s2 4 4-1" stroke={TEAL} /></Icon>
      </button>
      <svg className="h-[25px] min-w-0 flex-1 border-t border-black bg-[#292929]" fill="none">
        <rect x="2" y="0" width="7" height="24" fill="#8b8427" />
        {frames.map((f) => {
          const x = Math.round(6 + f * 12.46) + 0.5;
          return <path key={f} d={`M${x} 1v${f % 5 ? 10 : 21}`} stroke="#777" />;
        })}
        {frames.filter((f) => f % 5 === 0).map((f) => (
          <text key={f} x={Math.round(6 + f * 12.46)} y="22" fontSize="11" textAnchor="middle" fill={f ? "#c4c4c4" : "#e8dd4a"} fontFamily="Open Sans">{f}</text>
        ))}
      </svg>
    </div>
  );
}

/* ---------- command panel ---------- */

function Rollout({ title, closed, className = "", children }) {
  return (
    <section className={`mr-3 rounded-[3px] bg-[#515151] ${className}`}>
      <button type="button" className="flex h-[18px] w-full items-center pr-[7px] pl-1.5">
        {closed ? (
          <span className="mr-0.5 border-y-3 border-l-4 border-y-transparent border-l-[#c8c8c8]" />
        ) : (
          <span className="border-x-3 border-t-4 border-x-transparent border-t-[#c8c8c8]" />
        )}
        <span className="ml-1.5 text-xs leading-none font-bold text-white">{title}</span>
        <Icon size={7} className="ml-auto"><path d="M0 1h7M0 3h7M0 5h7" stroke="#999" strokeDasharray="1 2" /></Icon>
      </button>
      {children}
    </section>
  );
}

function Spinner({ id, label, value }) {
  return (
    <div className="flex h-[21px] items-center justify-end pr-[25px]">
      <label htmlFor={id} className="mr-1.5">{label}</label>
      <div className="relative">
        <input id={id} defaultValue={value} className="block h-4 w-[67px] bg-[#666666] pl-[3px] text-[11px] leading-none text-[#dddddd]" />
        <span className="pointer-events-none absolute top-1 right-1 flex flex-col gap-0.5">
          <span className="border-x-2 border-b-3 border-x-transparent border-b-white" />
          <span className="border-x-2 border-t-3 border-x-transparent border-t-white" />
        </span>
      </div>
    </div>
  );
}

const panelTabs = [
  ["创建", <path d="M8 0v16M0 8h16" stroke="#f2f2f2" strokeWidth="2" />],
  ["修改", <><path d="M2 2h12v12H2z" stroke="#2f9893" strokeDasharray="3 2" /><path d="M0 0h4v4H0zM12 0h4v4h-4zM0 12h4v4H0zM12 12h4v4h-4z" fill="#444" stroke="#2f9893" /><path d="M5 12q0-7 7-8" stroke="#aaa" strokeWidth="2" /></>],
  ["层次", <><path d="M2 0h12v5H2z" fill="#aaa" /><path d="M8 5v4M3 13V9h10v4" stroke="#2f9893" /><path d="M1 12h4v4H1zM11 12h4v4h-4z" fill="#2f9893" /></>],
  ["运动", <><circle cx="10" cy="8" r="6" fill="#a0a0a0" /><path d="M4 2q-4 6 0 12M1 3q-3 5 0 10" stroke="#2f9893" /></>],
  ["显示", <><path d="M0 1h16v9H0z" fill="#a0a0a0" /><path d="M4 15q4-4 8 0z" fill="#a0a0a0" /></>],
  ["实用程序", <path d="M3 1a4 4 0 0 0 4 6l6 8 3-2-7-8a4 4 0 0 0-5-4l2 3-2 2-3-2" fill="#aaa" />],
];
const createKinds = [
  ["几何体", <circle cx="8" cy="8" r="7" fill="#eee" stroke="#26364c" />],
  ["图形", <><circle cx="6" cy="6" r="5" fill="#ddd" /><path d="M7 7h8v8H7z" fill="#ddd" stroke="#444" /><path d="M7 11q4 0 4-5" stroke="#444" strokeWidth="2" /></>],
  ["灯光", <path d="M5 11C2 8 3 1 8 1s6 7 3 10zM6 12h4l-2 3z" fill="#ddd" />],
  ["摄影机", <path d="M1 3h10v10H1zM12 6l3-3v10l-3-3z" fill="#ddd" />],
  ["辅助对象", <path fillRule="evenodd" d="M2 1v14h14zm3 7 4 4H5z" fill="#ddd" />],
  ["空间扭曲", <path d="M1 4c4-3 6 2 9 0s3-1 5-2M1 9c4-3 6 2 9 0s3-1 5-2M1 14c4-3 6 2 9 0s3-1 5-2" stroke="#ccc" />],
  ["系统", <><Gear x={4} y={4} r={2} /><Gear x={11} y={11} r={3} /></>],
];
const primitives = ["长方体", "圆锥体", "球体", "几何球体", "圆柱体", "管状体", "圆环", "四棱锥", "茶壶", "平面", "加强型文本"];

function CommandPanel() {
  return (
    <aside aria-label="命令面板" className="flex w-[201px] shrink-0 flex-col bg-[#444444] pt-0.5 pl-1 text-[11px] text-[#dddddd]">
      <div className="-ml-[3px] flex h-[26px] shrink-0 gap-px bg-[#393939]">
        {panelTabs.map(([n, art], i) => (
          <button key={n} type="button" aria-label={n} className={`flex w-[31px] items-center justify-center ${i ? "bg-[#383838]" : "bg-[#444444]"}`}><Icon size={16}>{art}</Icon></button>
        ))}
      </div>
      <div className="mt-1 flex h-[24px] shrink-0 items-center gap-0.5 pl-[3px]">
        {createKinds.map(([n, art], i) => (
          <button key={n} type="button" aria-label={n} className={`flex h-[22px] w-[22px] items-center justify-center rounded-[3px] ${i ? "" : "bg-[#5c8bcb]"}`}><Icon size={16}>{art}</Icon></button>
        ))}
      </div>
      <div className="relative mt-1.5 mr-[5px] ml-0.5 shrink-0">
        <select aria-label="类别" className="h-5 w-full appearance-none bg-[#666666] pl-1 text-[11px] text-[#dddddd]"><option>标准基本体</option></select>
        <span className="pointer-events-none absolute top-2 right-2 border-x-3 border-t-5 border-x-transparent border-t-white" />
      </div>
      <div className="mt-1.5 flex min-h-0 flex-1 flex-col gap-1 overflow-hidden pl-0.5">
        <Rollout title="对象类型" className="pb-1">
          <label className="ml-[43px] flex h-[21px] items-center gap-1"><input type="checkbox" className="h-[11px] w-[11px] appearance-none bg-[#666]" />自动栅格</label>
          <div className="grid grid-cols-2 gap-x-[5px] gap-y-[5px] px-2.5 pt-px">
            {primitives.map((p, i) => (
              <button key={p} type="button" className={`h-4 rounded-[3px] border border-[#484848] text-[11px] leading-none ${i ? "bg-[#636363]" : "bg-[#5c8bcb]"}`}>{p}</button>
            ))}
          </div>
        </Rollout>
        <Rollout title="名称和颜色" className="pb-2.5">
          <div className="flex items-center gap-1 pt-2 pl-4">
            <input aria-label="对象名称" defaultValue="Box001" className="h-[19px] w-[131px] border border-[#484848] bg-[#666666] pl-0.5 text-[11px] text-[#dddddd]" />
            <button type="button" aria-label="对象颜色" className="h-[19px] w-[17px] border border-black bg-[#f2cdeb]" />
          </div>
        </Rollout>
        <Rollout title="创建方法" className="pb-1">
          <div className="flex h-[26px] items-center pl-[35px]">
            <label className="flex items-center gap-[7px]"><input type="radio" name="method" className="h-[10px] w-[10px] appearance-none rounded-full bg-[#666]" />立方体</label>
            <label className="ml-[19px] flex items-center gap-2"><input type="radio" name="method" defaultChecked className="h-[9px] w-[9px] appearance-none rounded-full border-2 border-[#888] bg-white" />长方体</label>
          </div>
        </Rollout>
        <Rollout title="键盘输入" closed />
        <Rollout title="参数" className="pb-[3px]">
          <div className="pt-1.5">
            <Spinner id="len" label="长度:" value="70.493" />
            <Spinner id="wid" label="宽度:" value="15.241" />
            <Spinner id="hei" label="高度:" value="31.297" />
          </div>
          <div className="pt-[7px] pb-[3px]">
            <Spinner id="lseg" label="长度分段:" value="1" />
            <Spinner id="wseg" label="宽度分段:" value="1" />
            <Spinner id="hseg" label="高度分段:" value="1" />
          </div>
          <label className="ml-[19px] flex h-[22px] items-center gap-1">
            <span className="relative h-[10px] w-[10px]">
              <input type="checkbox" defaultChecked className="block h-[10px] w-[10px] appearance-none bg-[#666]" />
              <Icon size={10} className="pointer-events-none absolute top-0 left-0"><path d="m2 5 2 3 5-6" stroke="#fff" strokeWidth="2" /></Icon>
            </span>
            生成贴图坐标
          </label>
          <label className="ml-[19px] flex h-[22px] items-center gap-1"><input type="checkbox" className="h-[10px] w-[10px] appearance-none bg-[#666]" />真实世界贴图大小</label>
        </Rollout>
      </div>
    </aside>
  );
}

/* ---------- status bar and taskbar ---------- */

function StatusBar() {
  return (
    <footer className="flex h-[51px] shrink-0 bg-[#444444] text-xs text-[#e4e4e4]">
      <div className="flex w-[105px] shrink-0 flex-col gap-px border-r border-black pt-0.5 pl-px">
        <div className="h-[22px] w-[98px] border-2 border-white border-t-[#888] border-l-[#888] bg-[#dec5c5]" />
        <input aria-label="MAXScript 侦听器" defaultValue="欢迎使用 MAXScr" className="h-[23px] w-[98px] border-2 border-white border-t-[#888] border-l-[#888] bg-white pl-1 font-[Liberation_Mono,Noto_Sans_CJK_SC,monospace] text-[11px] text-black" />
      </div>
      <div className="flex min-w-0 flex-1 flex-col pt-1 pl-1 text-[11px]">
        <p className="h-[25px] leading-6">选择了 1 个 对象</p>
        <p className="leading-6">首选项</p>
      </div>
      <div className="flex shrink-0 flex-col pt-1.5 pr-[500px]">
        <div className="flex h-[19px] items-center">
          <button type="button" aria-label="孤立当前选择"><Icon size={16}><path d="M1 4V1h3M12 1h3v3M15 12v3h-3M4 15H1v-3" stroke="#ddd" strokeWidth="2" /><path d="M5 5h6v6H5z" fill={TEAL} /></Icon></button>
          <button type="button" aria-label="选择锁定切换" className="ml-[11px]"><Icon size={16}><path d="M4 7V4a4 4 0 0 1 8 0v3" stroke="#222" strokeWidth="2" /><path d="M3 7h10v8H3z" fill="#555" stroke="#222" /><path d="M8 9v4" stroke="#222" strokeWidth="2" /></Icon></button>
          <button type="button" aria-label="绝对模式" className="ml-[11px]"><Icon size={16}><path d="M1 1h14v14H1z" stroke="#ddd" strokeWidth="2" /><circle cx="8" cy="8" r="4" stroke="#ddd" strokeWidth="2" /><path d="M8 2v3M8 11v3M2 8h3M11 8h3" stroke="#ddd" strokeWidth="2" /></Icon></button>
          {["X", "Y", "Z"].map((a, i) => (
            <label key={a} className={`flex items-center gap-1 ${i ? "ml-3" : "ml-[5px]"}`}>
              <span className="w-[11px]">{a}:</span>
              <input className="h-[17px] w-[57px] bg-[#5a5a5a] text-xs" />
            </label>
          ))}
          <span className="ml-4 w-[60px] whitespace-nowrap text-[11px]">栅格 = 10.0</span>
        </div>
        <button type="button" className="mt-[5px] ml-auto flex h-[21px] w-[86px] items-center gap-[5px] text-[11px] whitespace-nowrap text-[#cfcfcf]">
          <span className="flex h-[21px] w-[21px] shrink-0 items-center justify-center rounded-xs bg-[#5c8bcb]">
            <Icon size={14}><path d="m7 1 6 3v6l-6 3-6-3V4zM1 4l6 3 6-3M7 7v6" stroke="#1c2c40" strokeWidth="3" /><path d="m7 1 6 3v6l-6 3-6-3V4zM1 4l6 3 6-3M7 7v6" stroke="#ddd" /></Icon>
          </span>
          添加时间标记
        </button>
      </div>
    </footer>
  );
}

const taskIcons = [
  ["Cortana", "", <circle cx="13" cy="13" r="7" stroke="#fff" strokeWidth="2" />],
  ["任务视图", "", <path d="M5.500 5v3.500h10V5M5.500 21v-3.500h10V21M5.500 10.500h10v5h-10zM20.500 5v4M20.500 13v8M19.500 10.500h2v2h-2z" stroke="#fff" />],
  ["Microsoft Edge", "", <>
    <circle cx="13" cy="13" r="12" fill="#1173c5" />
    <path d="M1 12C2 5 7 1 13 1c7 0 12 5 12 10 0 4-3 6-6 6-4 0-3-2-3-4 0-6-10-8-15-1z" fill="#35c3c0" />
    <path d="M16 2c6 2 9 6 9 9 0 4-3 6-6 6-3 0-3-1-3-3 5-3 4-8 0-12z" fill="#5fd66a" />
    <path d="M10 9c-5 5-2 13 6 15-8 3-16-4-15-12 2-4 6-5 9-3z" fill="#1b93d8" />
    <path d="M11 12c-2 5 3 10 12 7-4 6-15 5-15-2 0-3 1-4 3-5z" fill="#14508f" />
  </>],
  ["文件资源管理器", "run", <><path d="M2 4h9l2 3h11v16H2z" fill="#f6c64a" /><path d="M2 9h22v14H2z" fill="#ffd968" /><path d="M7 14h12v9h-3v-4h-6v4H7z" fill="#2e8bd0" /></>],
  ["截图工具", "", <><ellipse cx="12" cy="14" rx="11" ry="9" fill="#a08a86" /><ellipse cx="13" cy="10" rx="11" ry="7" fill="#f3f3f6" stroke="#c22" /><path d="m11 5 9 14M18 5l-6 13" stroke="#777" /><circle cx="14" cy="21" r="2" stroke="#1c7fae" strokeWidth="2" /><circle cx="21" cy="19" r="3" stroke="#1c7fae" strokeWidth="2" /></>],
  ["画图", "run", <><path d="M2 15C2 8 9 5 15 6s8 6 6 11-7 8-12 7c-3-1 0-4-2-5s-5 0-5-4z" fill="#d4ebf5" stroke="#8ab" /><circle cx="7" cy="12" r="2" fill="#d44" /><circle cx="12" cy="10" r="2" fill="#5b5" /><circle cx="10" cy="17" r="2" fill="#36c" /><path d="m14 23 8-18" stroke="#e0932c" strokeWidth="3" /><path d="m20 6 2-5 3 2-2 5z" fill="#c9a56a" /></>],
  ["Firefox", "", <><path d="M2 14C1 9 4 6 5 2l4 3c2-1 3-3 5-5 1 3 4 3 5 6l2-2c4 5 5 11 2 16-5 7-18 7-21-6z" fill="#ff8a1e" /><path d="M13 2c2 3 8 4 9 10s-3 10-8 10c8 1 11-6 10-11-1-6-6-7-11-9z" fill="#ffd53c" /><circle cx="13" cy="14" r="5" fill="#7a3fc9" /><path d="M2 14c1 9 11 12 18 7-8 1-12-3-11-9 2-1 4 0 5-1-2-3-6-4-9-1-2 1-3 2-3 4z" fill="#ff4f35" /></>],
  ["CAD 查看器", "run", <><path d="M1 1h24v24H1z" fill="#5c7ec4" stroke="#dde" /><path d="M4 3h18v20H4z" fill="#f2f2f4" /><path d="M5 13C11 12 14 8 17 3h4C18 11 13 15 5 16z" fill="#2d63c5" /><path d="M6 22c7-1 11-5 14-11l1 3c-3 6-8 9-15 9z" fill="#ef9c24" /></>],
  ["3ds Max", "on", <><path d="M1 1h24v24H1z" fill="#e2f3f0" /><path d="M8 5q4-3 8-1 3 4-3 6 6 1 4 6-3 4-9 1" stroke="#14877f" strokeWidth="4" /><text x="18" y="24" fontSize="6" fontWeight="700" textAnchor="middle" fill="#14877f" fontFamily="Open Sans">MAX</text></>],
  ["录屏", "run", <><rect x="1" y="1" width="24" height="24" rx="4" fill="#fff" /><path d="m8 3 10 5c2 1 2 3 0 4l-9 5-1-5 5-2-5-2z" fill="#f0245c" /><path d="m9 12 8-3-8 8z" fill="#18b5d8" /><text x="9" y="24" fontSize="6" fontWeight="700" textAnchor="middle" fill="#f0245c" fontFamily="Open Sans">YOU</text><rect x="13" y="15" width="13" height="11" rx="1" fill="#d5ecfb" stroke="#3b9bd8" /><path d="M17 18v6M22 18v6" stroke="#1f76b9" strokeWidth="2" /></>],
];

function Taskbar() {
  return (
    <div className="flex h-10 shrink-0 bg-[#30321f]">
      <button type="button" aria-label="开始" className="flex w-12 shrink-0 items-center justify-center bg-[#22291f]">
        <Icon size={16}><path d="M0 2l7-1v6H0zM8 1l8-1v7H8zM0 8h7v7l-7-1zM8 8h8v8l-8-1z" fill="#fff" /></Icon>
      </button>
      <label className="flex w-[344px] shrink-0 items-center border border-[#c8c8c8] bg-[#f2f2f2] pl-[11px]">
        <Icon size={18}><circle cx="11" cy="7" r="5" stroke="#222" /><path d="m7 11-6 6" stroke="#222" strokeWidth="1" /></Icon>
        <input aria-label="搜索" placeholder="在这里输入你要搜索的内容" className="ml-2.5 w-full bg-transparent text-sm placeholder:text-[#333]" />
      </label>
      <div className="flex gap-px">
        {taskIcons.map(([name, state, art]) => (
          <button key={name} type="button" aria-label={name} className={`relative flex w-12 items-center justify-center ${state === "on" ? "bg-[#5e5f50]" : ""}`}>
            <Icon size={26}>{art}</Icon>
            {state && <span className={`absolute bottom-0 h-0.5 bg-[#76b9ed] ${state === "on" ? "inset-x-0" : "inset-x-1"}`} />}
          </button>
        ))}
      </div>
    </div>
  );
}

function SiteBadge() {
  return (
    <a href="#civilcn" className="absolute right-0 bottom-0 z-40 flex h-[242px] w-[485px] items-center bg-white pl-11 text-black no-underline">
      <svg width="130" height="104" viewBox="0 0 130 104" fill="none" className="-mt-1 shrink-0 overflow-visible" aria-hidden="true">
        <path d="M38 27 61 15v68H38z" fill="#1d4aa0" /><path d="M42 42 60 24v59H42z" fill="#5b8ed0" opacity=".5" />
        <path d="M65 17 91 30v8L74 45v37h-9z" fill="#dedfe2" /><path d="m97 41 20 10-20 18z" fill="#dedfe2" />
        <path d="M75 47 93 38v30L75 77z" fill="#1c3f93" /><path d="M10 60 29 51v29C20 77 13 69 10 60z" fill="#1c3f93" />
        <path d="M9 44C24 18 54 1 86 0c30 0 47 18 40 44h-4C124 22 108 8 82 9 54 10 28 24 9 44z" fill="#93c22c" />
        <path d="M5 53C5 76 24 89 52 87 86 84 113 66 128 41 122 70 88 98 48 102 16 104-5 80 5 53z" fill="#1c3c92" />
      </svg>
      <span className="flex flex-col pt-0.5 italic">
        <strong className="font-['Noto_Sans_CJK_SC',sans-serif] text-[53px] leading-[50px] font-black whitespace-nowrap">土木工程网</strong>
        <span className="font-['Noto_Sans',sans-serif] text-[35px] leading-9 font-medium">www.civilcn.com</span>
      </span>
    </a>
  );
}

export default function App() {
  return (
    <div className="relative flex h-screen flex-col overflow-hidden bg-[#444444] font-['Open_Sans','Noto_Sans_CJK_SC',sans-serif]">
      <TitleBar />
      <MenuBar />
      <AppButton />
      <Toolbar />
      <RibbonBars />
      <div className="flex min-h-0 flex-1">
        <aside aria-label="视口布局" className="flex w-[39px] shrink-0 flex-col items-center border-r-2 border-[#262626] bg-[#333333]">
          <div className="h-[11px] w-full shrink-0 bg-[#444] pt-[5px]"><div className="h-0.5 border-b border-black" /></div>
          <button type="button" aria-label="展开" className="mt-auto flex h-[19px] w-[19px] items-center justify-center rounded-[3px] bg-[#565656]">
            <span className="border-y-4 border-l-5 border-y-transparent border-l-white" />
          </button>
          <button type="button" aria-label="四视图布局" className="mt-[11px] mb-0.5 flex h-[43px] w-[34px] items-center justify-center self-end rounded-l-[3px] bg-linear-to-b from-[#4d6282] to-[#3f7fd8]">
            <Icon size={30}><path d="M1 1h28v28H1zM15 1v28M1 15h28" fill="#55677f" stroke="#253246" strokeWidth="2" /></Icon>
          </button>
        </aside>
        <SceneExplorer />
        <div className="flex min-w-0 flex-1 flex-col">
          <Viewports />
          <TimeSlider />
          <TrackBar />
        </div>
        <CommandPanel />
      </div>
      <StatusBar />
      <Taskbar />
      <SiteBadge />
    </div>
  );
}
